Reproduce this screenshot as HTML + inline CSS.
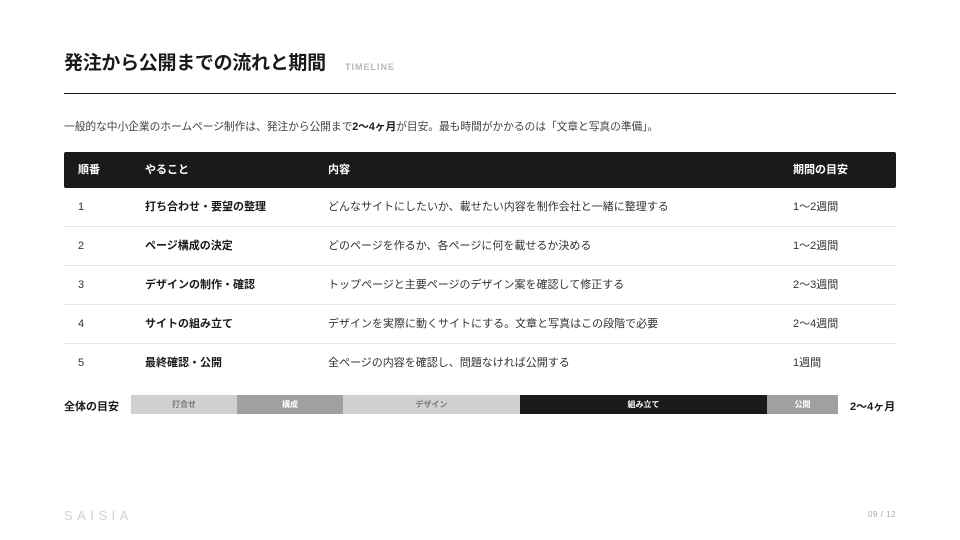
<!DOCTYPE html>
<html><head><meta charset="utf-8"><style>
*{margin:0;padding:0;box-sizing:border-box}
body{width:960px;height:540px;background:#fff;font-family:"Liberation Sans","Noto Sans CJK JP",sans-serif;color:#1a1a1a;position:relative;overflow:hidden}
.abs{position:absolute;white-space:nowrap}
h1{position:absolute;left:64px;top:50px;font-size:19px;font-weight:700;line-height:28px;letter-spacing:-0.3px}
.tl{left:345px;top:62px;font-size:9px;font-weight:700;letter-spacing:1px;color:#b8b8b8}
.rule{position:absolute;left:64px;top:93px;width:832px;height:1px;background:#1a1a1a}
.lead{left:64px;top:118px;font-size:10.8px;color:#444;letter-spacing:-0.1px}
.lead b{color:#1a1a1a}
.hdr{position:absolute;left:64px;top:152px;width:832px;height:36px;background:#1a1a1a;border-radius:2px}
.hdr span{position:absolute;top:0;line-height:36px;font-size:11px;font-weight:700;color:#fff}
.row{position:absolute;left:64px;width:832px;height:39px;border-bottom:1px solid #e6e6e6}
.row span{position:absolute;top:0;line-height:38px;font-size:11px;color:#333;white-space:nowrap}
.row span.b{font-weight:700;color:#1a1a1a}
.c1{left:14px}.c2{left:81px}.c3{left:264px}.c4{left:729px}
.bar{position:absolute;top:395px;height:19px;font-size:8px;text-align:center;line-height:19px;font-weight:700}
</style></head><body>
<h1>発注から公開までの流れと期間</h1>
<div class="abs tl">TIMELINE</div>
<div class="rule"></div>
<div class="abs lead">一般的な中小企業のホームページ制作は、発注から公開まで<b>2〜4ヶ月</b>が目安。最も時間がかかるのは「文章と写真の準備」。</div>
<div class="hdr"><span style="left:14px">順番</span><span style="left:81px">やること</span><span style="left:264px">内容</span><span style="left:729px">期間の目安</span></div>
<div class="row" style="top:188px"><span class="c1">1</span><span class="c2 b">打ち合わせ・要望の整理</span><span class="c3">どんなサイトにしたいか、載せたい内容を制作会社と一緒に整理する</span><span class="c4">1〜2週間</span></div>
<div class="row" style="top:227px"><span class="c1">2</span><span class="c2 b">ページ構成の決定</span><span class="c3">どのページを作るか、各ページに何を載せるか決める</span><span class="c4">1〜2週間</span></div>
<div class="row" style="top:266px"><span class="c1">3</span><span class="c2 b">デザインの制作・確認</span><span class="c3">トップページと主要ページのデザイン案を確認して修正する</span><span class="c4">2〜3週間</span></div>
<div class="row" style="top:305px"><span class="c1">4</span><span class="c2 b">サイトの組み立て</span><span class="c3">デザインを実際に動くサイトにする。文章と写真はこの段階で必要</span><span class="c4">2〜4週間</span></div>
<div class="row" style="top:344px;border-bottom:none"><span class="c1">5</span><span class="c2 b">最終確認・公開</span><span class="c3">全ページの内容を確認し、問題なければ公開する</span><span class="c4">1週間</span></div>
<div class="abs" style="left:64px;top:398px;font-size:11px;font-weight:700">全体の目安</div>
<div class="bar" style="left:131px;width:106px;background:#d0d0d0;color:#777">打合せ</div>
<div class="bar" style="left:237px;width:106px;background:#a0a0a0;color:#fff">構成</div>
<div class="bar" style="left:343px;width:177px;background:#d0d0d0;color:#777">デザイン</div>
<div class="bar" style="left:520px;width:247px;background:#1a1a1a;color:#fff">組み立て</div>
<div class="bar" style="left:767px;width:71px;background:#a0a0a0;color:#fff">公開</div>
<div class="abs" style="left:850px;top:398px;font-size:11px;font-weight:700">2〜4ヶ月</div>
<div class="abs" style="left:64px;top:508px;font-size:13px;letter-spacing:4.5px;color:#d0d0d0">SAISIA</div>
<div class="abs" style="right:64px;top:510px;font-size:8px;color:#aaa;letter-spacing:0.5px">09 / 12</div>
</body></html>
